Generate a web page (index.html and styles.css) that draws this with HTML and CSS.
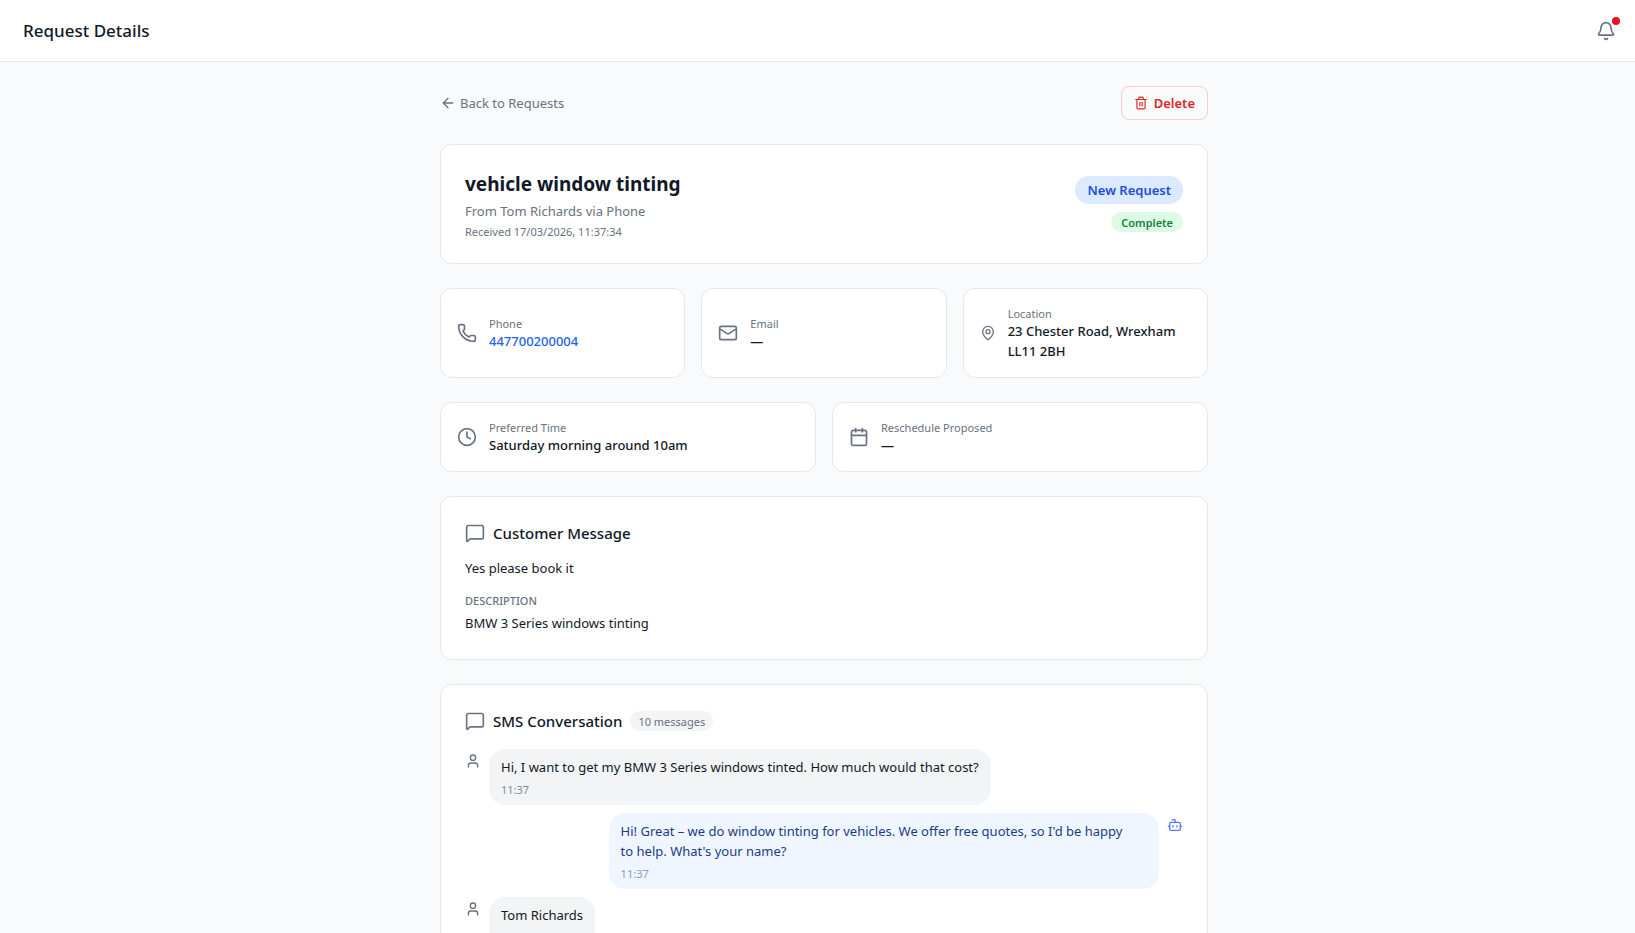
FILE: index.html
```html
<!DOCTYPE html>
<html lang="en">
<head>
  <meta charset="UTF-8">
  <meta name="viewport" content="width=device-width, initial-scale=1">
  <title>Request Details</title>
  <link rel="stylesheet" href="styles.css">
</head>
<body>
  <header class="topbar">
    <h1>Request Details</h1>
    <button class="bell-btn" type="button" aria-label="Notifications">
      <svg class="icon" viewBox="0 0 24 24"><path d="M10.268 21a2 2 0 0 0 3.464 0"/><path d="M3.262 15.326A1 1 0 0 0 4 17h16a1 1 0 0 0 .74-1.673C19.41 13.956 18 12.499 18 8A6 6 0 0 0 6 8c0 4.499-1.411 5.956-2.738 7.326"/></svg>
      <span class="bell-dot"></span>
    </button>
  </header>

  <main class="page">
    <div class="content">
      <div class="toolbar">
        <a class="back" href="#">
          <svg class="icon icon-sm" viewBox="0 0 24 24"><path d="m12 19-7-7 7-7"/><path d="M19 12H5"/></svg>
          Back to Requests
        </a>
        <button class="btn-delete" type="button">
          <svg class="icon icon-xs" viewBox="0 0 24 24"><path d="M10 11v6"/><path d="M14 11v6"/><path d="M19 6v14a2 2 0 0 1-2 2H7a2 2 0 0 1-2-2V6"/><path d="M3 6h18"/><path d="M8 6V4a2 2 0 0 1 2-2h4a2 2 0 0 1 2 2v2"/></svg>
          Delete
        </button>
      </div>

      <section class="card summary">
        <div>
          <h2>vehicle window tinting</h2>
          <p class="from">From Tom Richards via Phone</p>
          <p class="received">Received 17/03/2026, 11:37:34</p>
        </div>
        <div class="badges">
          <span class="badge badge-new">New Request</span>
          <span class="badge badge-complete">Complete</span>
        </div>
      </section>

      <div class="grid grid-3">
        <div class="card info">
          <svg class="icon" viewBox="0 0 24 24"><path d="M13.832 16.568a1 1 0 0 0 1.213-.303l.355-.465A2 2 0 0 1 17 15h3a2 2 0 0 1 2 2v3a2 2 0 0 1-2 2A18 18 0 0 1 2 4a2 2 0 0 1 2-2h3a2 2 0 0 1 2 2v3a2 2 0 0 1-.8 1.6l-.468.351a1 1 0 0 0-.292 1.233 14 14 0 0 0 6.392 6.384"/></svg>
          <div>
            <p class="label">Phone</p>
            <a class="value" href="tel:447700200004">447700200004</a>
          </div>
        </div>
        <div class="card info">
          <svg class="icon" viewBox="0 0 24 24"><path d="m22 7-8.991 5.727a2 2 0 0 1-2.009 0L2 7"/><rect x="2" y="4" width="20" height="16" rx="2"/></svg>
          <div>
            <p class="label">Email</p>
            <p class="value">—</p>
          </div>
        </div>
        <div class="card info">
          <svg class="icon icon-sm" viewBox="0 0 24 24"><path d="M20 10c0 4.993-5.539 10.193-7.399 11.799a1 1 0 0 1-1.202 0C9.539 20.193 4 14.993 4 10a8 8 0 0 1 16 0"/><circle cx="12" cy="10" r="3"/></svg>
          <div>
            <p class="label">Location</p>
            <p class="value">23 Chester Road, Wrexham LL11 2BH</p>
          </div>
        </div>
      </div>

      <div class="grid grid-2">
        <div class="card info">
          <svg class="icon" viewBox="0 0 24 24"><path d="M12 6v6l4 2"/><circle cx="12" cy="12" r="10"/></svg>
          <div>
            <p class="label">Preferred Time</p>
            <p class="value">Saturday morning around 10am</p>
          </div>
        </div>
        <div class="card info">
          <svg class="icon" viewBox="0 0 24 24"><path d="M8 2v4"/><path d="M16 2v4"/><rect x="3" y="4" width="18" height="18" rx="2"/><path d="M3 10h18"/></svg>
          <div>
            <p class="label">Reschedule Proposed</p>
            <p class="value">—</p>
          </div>
        </div>
      </div>

      <section class="card">
        <div class="card-head">
          <svg class="icon" viewBox="0 0 24 24"><path d="M22 17a2 2 0 0 1-2 2H6.828a2 2 0 0 0-1.414.586l-2.202 2.202A.71.71 0 0 1 2 21.286V5a2 2 0 0 1 2-2h16a2 2 0 0 1 2 2z"/></svg>
          <h3>Customer Message</h3>
        </div>
        <p class="message">Yes please book it</p>
        <h4>DESCRIPTION</h4>
        <p class="message">BMW 3 Series windows tinting</p>
      </section>

      <section class="card">
        <div class="card-head card-head-chat">
          <svg class="icon" viewBox="0 0 24 24"><path d="M22 17a2 2 0 0 1-2 2H6.828a2 2 0 0 0-1.414.586l-2.202 2.202A.71.71 0 0 1 2 21.286V5a2 2 0 0 1 2-2h16a2 2 0 0 1 2 2z"/></svg>
          <h3>SMS Conversation</h3>
          <span class="count">10 messages</span>
        </div>
        <div class="chat">
          <div class="chat-row">
            <svg class="icon icon-sm" viewBox="0 0 24 24"><path d="M19 21v-2a4 4 0 0 0-4-4H9a4 4 0 0 0-4 4v2"/><circle cx="12" cy="7" r="4"/></svg>
            <div class="bubble">
              <p>Hi, I want to get my BMW 3 Series windows tinted. How much would that cost?</p>
              <time>11:37</time>
            </div>
          </div>
          <div class="chat-row chat-row-bot">
            <div class="bubble">
              <p>Hi! Great – we do window tinting for vehicles. We offer free quotes, so I'd be happy to&nbsp;help. What's your name?</p>
              <time>11:37</time>
            </div>
            <svg class="icon icon-sm" viewBox="0 0 24 24"><path d="M12 8V4H8"/><rect x="4" y="8" width="16" height="12" rx="2"/><path d="M2 14h2"/><path d="M20 14h2"/><path d="M15 13v2"/><path d="M9 13v2"/></svg>
          </div>
          <div class="chat-row">
            <svg class="icon icon-sm" viewBox="0 0 24 24"><path d="M19 21v-2a4 4 0 0 0-4-4H9a4 4 0 0 0-4 4v2"/><circle cx="12" cy="7" r="4"/></svg>
            <div class="bubble bubble-last">
              <p>Tom Richards</p>
            </div>
          </div>
        </div>
      </section>
    </div>
  </main>
</body>
</html>
```
FILE: styles.css
```css
:root {
  --bg: #f9fafb;
  --border: #e5e7eb;
  --text: #111827;
  --muted: #6b7280;
  --blue: #2563eb;
}

* { box-sizing: border-box; margin: 0; padding: 0; }

body {
  height: 100vh;
  overflow: hidden;
  display: flex;
  flex-direction: column;
  background: var(--bg);
  color: var(--text);
  font-family: "Segoe UI", "Noto Sans", "Open Sans", sans-serif;
  font-size: 13px;
  line-height: 20px;
}
a { text-decoration: none; }
button { font: inherit; cursor: pointer; }

/* Icons */
.icon {
  width: 20px;
  height: 20px;
  flex-shrink: 0;
  fill: none;
  stroke: currentColor;
  stroke-width: 2;
  stroke-linecap: round;
  stroke-linejoin: round;
  color: var(--muted);
}
.icon-sm { width: 16px; height: 16px; }
.icon-xs { width: 14px; height: 14px; }

/* Top bar */
.topbar {
  flex-shrink: 0;
  display: flex;
  align-items: center;
  justify-content: space-between;
  height: 62px;
  padding: 0 11px 0 23px;
  background: #fff;
  border-bottom: 1px solid var(--border);
}
.topbar h1 { font-size: 17px; font-weight: 500; line-height: 28px; }
.bell-btn {
  position: relative;
  display: flex;
  padding: 8px;
  border: none;
  background: none;
}
.bell-dot {
  position: absolute;
  top: 4px;
  right: 4px;
  width: 8px;
  height: 8px;
  border-radius: 50%;
  background: #e7131f;
}

/* Page column */
.page {
  flex: 1;
  min-height: 0;
  overflow-y: auto;
  scrollbar-width: none;
  padding: 24px 24px 24px 37px;
}
.content {
  display: flex;
  flex-direction: column;
  gap: 24px;
  max-width: 768px;
  margin: 0 auto;
}
.toolbar {
  display: flex;
  align-items: center;
  justify-content: space-between;
}
.back {
  display: flex;
  align-items: center;
  gap: 4px;
  color: var(--muted);
}
.btn-delete {
  display: flex;
  align-items: center;
  gap: 6px;
  padding: 6px 12px;
  border: 1px solid #fecaca;
  border-radius: 8px;
  background: none;
  color: #dc2626;
  font-weight: 600;
}
.btn-delete .icon { color: inherit; }

/* Cards */
.card {
  padding: 24px;
  background: #fff;
  border: 1px solid var(--border);
  border-radius: 12px;
}
.summary {
  display: flex;
  align-items: center;
  justify-content: space-between;
}
.summary h2 { font-size: 19px; font-weight: 700; line-height: 30px; }
.from { margin-top: 2px; color: var(--muted); }
.received { margin-top: 2px; padding-top: 2px; color: var(--muted); font-size: 11px; line-height: 14px; }
.badges {
  display: flex;
  flex-direction: column;
  align-items: flex-end;
  gap: 8px;
}
.badge { border-radius: 14px; font-weight: 600; }
.badge-new { padding: 4px 12px; background: #dbeafe; color: #1d4ed8; }
.badge-complete {
  padding: 3px 10px 1px;
  background: #dcfce7;
  color: #15803d;
  font-size: 11px;
  line-height: 16px;
}

/* Info tiles */
.grid { display: grid; gap: 16px; }
.grid-3 { grid-template-columns: repeat(3, 1fr); }
.grid-2 { grid-template-columns: repeat(2, 1fr); }
.info {
  display: flex;
  align-items: center;
  gap: 12px;
  padding: 16px;
}
.label { padding-top: 2px; color: var(--muted); font-size: 11px; line-height: 14px; }
.value { display: block; font-weight: 500; }
a.value { color: var(--blue); }

/* Message card */
.card-head {
  display: flex;
  align-items: center;
  gap: 8px;
  margin-bottom: 12px;
}
.card-head h3 { font-size: 15px; font-weight: 500; line-height: 24px; }
.message { line-height: 23px; }
.card h4 {
  margin: 12px 0 4px;
  padding-top: 2px;
  color: var(--muted);
  font-size: 11px;
  font-weight: 500;
  line-height: 14px;
}

/* Conversation */
.card-head-chat { margin-bottom: 16px; }
.count {
  padding: 3px 8px 1px;
  border-radius: 10px;
  background: #f3f4f6;
  color: var(--muted);
  font-size: 11px;
  line-height: 16px;
}
.chat { display: flex; flex-direction: column; gap: 8px; }
.chat-row {
  display: flex;
  align-items: flex-start;
  align-self: flex-start;
  gap: 8px;
  max-width: 80%;
}
.chat-row .icon { margin-top: 4px; }
.chat-row-bot { align-self: flex-end; }
.chat-row-bot .icon { color: #5b7cfa; }
.bubble {
  padding: 8px 12px;
  border-radius: 16px;
  background: #f3f4f6;
}
.bubble-last { padding-bottom: 28px; }
.chat-row-bot .bubble { background: #eff6ff; color: #1e3a8a; }
.bubble time {
  display: block;
  margin-top: 4px;
  padding-top: 2px;
  font-size: 11px;
  line-height: 14px;
  opacity: .5;
}
```
